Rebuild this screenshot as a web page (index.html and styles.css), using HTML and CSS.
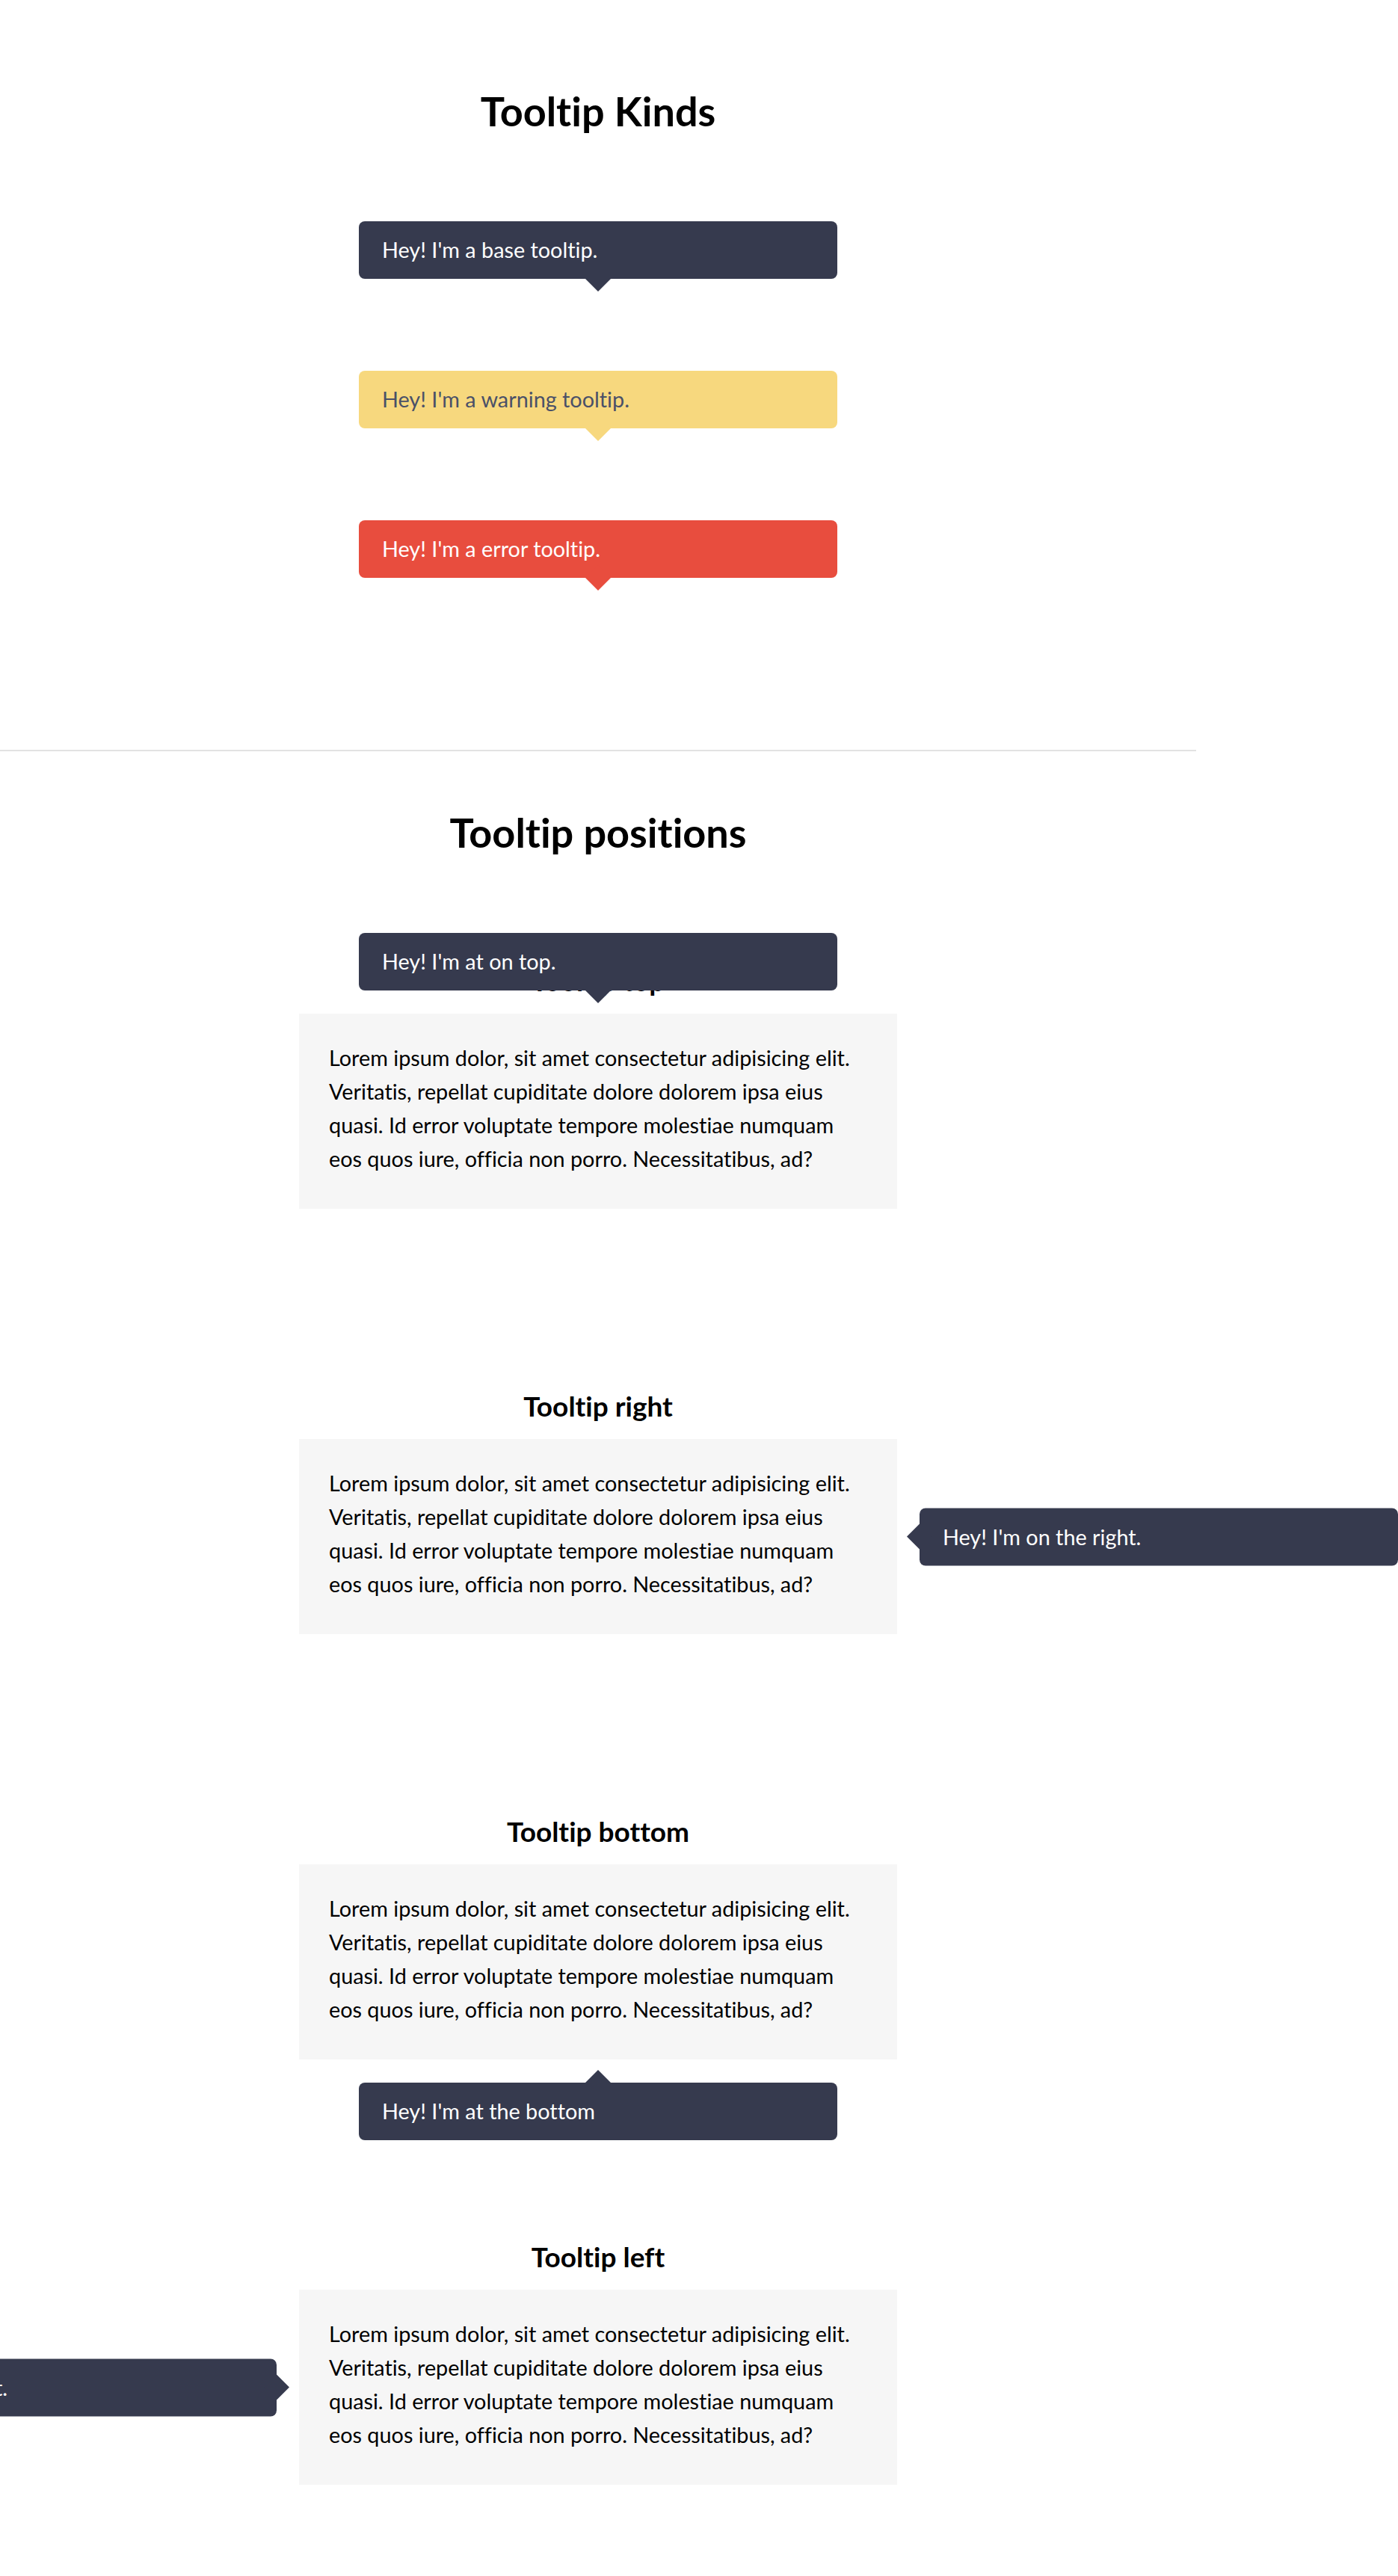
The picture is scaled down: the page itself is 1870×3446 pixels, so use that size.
FILE: index.html
```html
<!DOCTYPE html>
<html lang="en">
<head>
<meta charset="utf-8">
<title>Tooltips</title>
<link rel="stylesheet" href="styles.css">
</head>
<body>
<main class="page">
  <section class="kinds">
    <h1 class="title">Tooltip Kinds</h1>
    <div class="kind-list">
      <div class="tooltip tooltip--down">Hey! I'm a base tooltip.</div>
      <div class="tooltip tooltip--down tooltip--warning">Hey! I'm a warning tooltip.</div>
      <div class="tooltip tooltip--down tooltip--error">Hey! I'm a error tooltip.</div>
    </div>
  </section>

  <div class="divider"></div>

  <section class="positions">
    <h1 class="title title--positions">Tooltip positions</h1>
    <div class="demo-list">
      <div class="demo">
        <h3 class="demo-title">Tooltip top</h3>
        <div class="demo-box">
          <p class="demo-text">Lorem ipsum dolor, sit amet consectetur adipisicing elit. Veritatis, repellat cupiditate dolore dolorem ipsa eius quasi. Id error voluptate tempore molestiae numquam eos quos iure, officia non porro. Necessitatibus, ad?</p>
          <div class="tooltip tooltip--float tooltip--top">Hey! I'm at on top.</div>
        </div>
      </div>

      <div class="demo">
        <h3 class="demo-title">Tooltip right</h3>
        <div class="demo-box">
          <p class="demo-text">Lorem ipsum dolor, sit amet consectetur adipisicing elit. Veritatis, repellat cupiditate dolore dolorem ipsa eius quasi. Id error voluptate tempore molestiae numquam eos quos iure, officia non porro. Necessitatibus, ad?</p>
          <div class="tooltip tooltip--float tooltip--right">Hey! I'm on the right.</div>
        </div>
      </div>

      <div class="demo">
        <h3 class="demo-title">Tooltip bottom</h3>
        <div class="demo-box">
          <p class="demo-text">Lorem ipsum dolor, sit amet consectetur adipisicing elit. Veritatis, repellat cupiditate dolore dolorem ipsa eius quasi. Id error voluptate tempore molestiae numquam eos quos iure, officia non porro. Necessitatibus, ad?</p>
          <div class="tooltip tooltip--float tooltip--bottom">Hey! I'm at the bottom</div>
        </div>
      </div>

      <div class="demo">
        <h3 class="demo-title">Tooltip left</h3>
        <div class="demo-box">
          <p class="demo-text">Lorem ipsum dolor, sit amet consectetur adipisicing elit. Veritatis, repellat cupiditate dolore dolorem ipsa eius quasi. Id error voluptate tempore molestiae numquam eos quos iure, officia non porro. Necessitatibus, ad?</p>
          <div class="tooltip tooltip--float tooltip--left">Hey! I'm on the left.</div>
        </div>
      </div>
    </div>
  </section>
</main>
</body>
</html>
```

FILE: styles.css
```css
html, body {
  margin: 0;
  padding: 0;
  background: #ffffff;
}

body {
  font-family: "Lato", "Liberation Sans", sans-serif;
  font-variant-ligatures: no-common-ligatures;
  color: #000000;
  overflow: hidden;
}

.page {
  width: 1600px;
}

.title {
  margin: 0;
  font-size: 54px;
  line-height: 64px;
  font-weight: 700;
  text-align: center;
  color: #000;
}

.kinds {
  padding-top: 117px;
}

.kind-list {
  margin-top: 115px;
  display: flex;
  flex-direction: column;
  align-items: center;
  gap: 123px;
}

.divider {
  margin-top: 230px;
  height: 2px;
  background: #e2e2e2;
}

.title--positions {
  margin-top: 77px;
}

.demo-list {
  margin-top: 144px;
  display: flex;
  flex-direction: column;
  gap: 242px;
}

.demo {
  width: 800px;
  margin: 0 auto;
}

.demo-title {
  margin: 0 0 22px;
  font-size: 37px;
  line-height: 44px;
  font-weight: 700;
  text-align: center;
}

.demo-box {
  position: relative;
  background: #f6f6f6;
  padding: 37px 40px 44px;
}

.demo-text {
  margin: 0;
  font-size: 28.8px;
  line-height: 45px;
  color: #000;
}

/* Tooltip */
.tooltip {
  position: relative;
  box-sizing: border-box;
  width: 640px;
  height: 77px;
  padding: 0 31px;
  border-radius: 8px;
  background: #363a4e;
  color: #ffffff;
  font-size: 28.8px;
  line-height: 77px;
  white-space: nowrap;
}

.tooltip::after {
  content: "";
  position: absolute;
  width: 24px;
  height: 24px;
  background: inherit;
  border-radius: 0;
  transform: rotate(45deg);
}

.tooltip--warning {
  background: #f7d87e;
  color: #4a5068;
}

.tooltip--error {
  background: #e84d3e;
}

.tooltip--down::after,
.tooltip--top::after {
  left: 50%;
  bottom: -12px;
  margin-left: -12px;
}

.tooltip--float {
  position: absolute;
  z-index: 2;
}

.tooltip--top {
  left: 50%;
  bottom: calc(100% + 31px);
  transform: translateX(-50%);
}

.tooltip--bottom {
  left: 50%;
  top: calc(100% + 31px);
  transform: translateX(-50%);
}

.tooltip--bottom::after {
  left: 50%;
  top: -12px;
  margin-left: -12px;
}

.tooltip--right {
  top: 50%;
  left: calc(100% + 30px);
  transform: translateY(-50%);
}

.tooltip--right::after {
  left: -12px;
  top: 50%;
  margin-top: -12px;
}

.tooltip--left {
  top: 50%;
  right: calc(100% + 30px);
  transform: translateY(-50%);
}

.tooltip--left::after {
  right: -12px;
  top: 50%;
  margin-top: -12px;
}
```
